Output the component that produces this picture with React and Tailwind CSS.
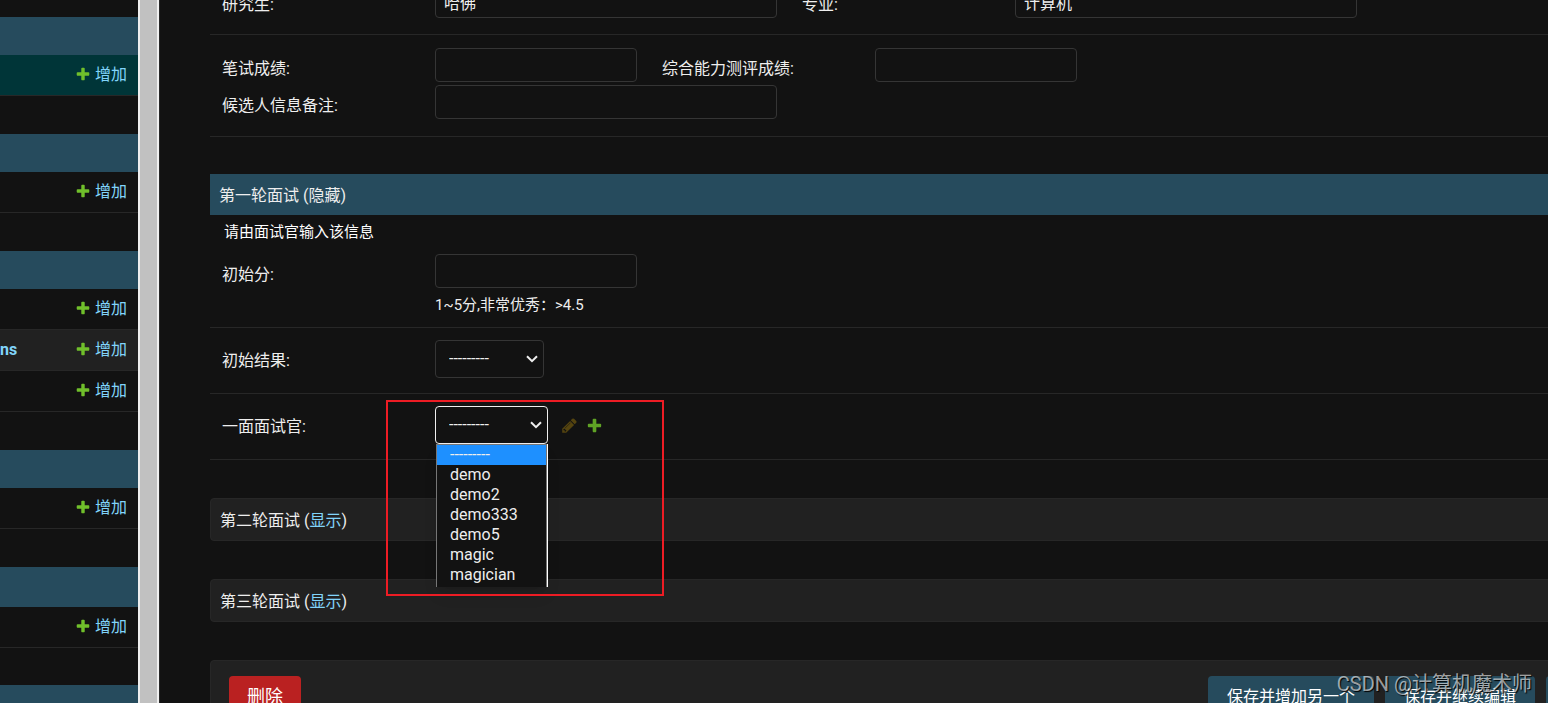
import React, { useState } from 'react';

const sidebarGroups = [
  { rows: [{ name: '', current: true }] },
  { rows: [{ name: '' }] },
  { rows: [{ name: '' }, { name: 'ns', striped: true }, { name: '' }] },
  { rows: [{ name: '' }] },
  { rows: [{ name: '' }], tall: true },
  { rows: [] },
];

const interviewers = ['---------', 'demo', 'demo2', 'demo333', 'demo5', 'magic', 'magician'];

const PlusIcon = ({ className }) => (
  <svg viewBox="0 0 1792 1792" className={className} fill="currentColor" aria-hidden="true">
    <path d="M1600 796v192q0 40-28 68t-68 28h-416v416q0 40-28 68t-68 28h-192q-40 0-68-28t-28-68v-416h-416q-40 0-68-28t-28-68v-192q0-40 28-68t68-28h416v-416q0-40 28-68t68-28h192q40 0 68 28t28 68v416h416q40 0 68 28t28 68z" />
  </svg>
);

const PencilIcon = ({ className }) => (
  <svg viewBox="0 0 1792 1792" className={className} fill="currentColor" aria-hidden="true">
    <path d="M491 1536l91-91-235-235-91 91v107h128v128h107zm523-928q0-22-22-22-10 0-17 7l-542 542q-7 7-7 17 0 22 22 22 10 0 17-7l542-542q7-7 7-17zm-54-192l416 416-832 832h-416v-416zm683 96q0 53-37 90l-166 166-416-416 166-165q36-38 90-38 53 0 91 38l235 234q37 39 37 91z" />
  </svg>
);

const Sidebar = () => (
  <nav className="w-[138px] shrink-0 overflow-hidden pt-[17px]">
    {sidebarGroups.map((group, i) => (
      <section key={i} className={group.tall ? 'mb-[37px]' : 'mb-[38px]'}>
        <div className={group.tall ? 'h-10 bg-[#264b5d]' : 'h-[38px] bg-[#264b5d]'} />
        {group.rows.map((row, j) => (
          <div
            key={j}
            className={`flex h-[41px] items-center justify-between border-b border-[#272727] pr-[11px] ${
              row.current ? 'bg-[#003538]' : row.striped ? 'bg-[#212121]' : ''
            }`}
          >
            <span className="font-bold text-[#81d4fa]">{row.name}</span>
            <a href="#" className="flex items-center gap-1 text-[#81d4fa]">
              <PlusIcon className="mb-0.5 size-4 text-[#70bf2b]" />
              增加
            </a>
          </div>
        ))}
      </section>
    ))}
  </nav>
);

const Row = ({ className = 'pt-3 pb-[15px]', children }) => (
  <div className={`border-b border-[#272727] px-3 ${className}`}>{children}</div>
);

const Field = ({ id, label, children }) => (
  <div className="flex items-start">
    <label htmlFor={id} className="w-[213px] shrink-0 pt-[11px] leading-5">{label}</label>
    {children}
  </div>
);

const TextInput = ({ id, wide, defaultValue }) => (
  <input
    id={id}
    type="text"
    defaultValue={defaultValue}
    className={`h-[34px] rounded border border-[#353535] bg-[#121212] px-2 pt-0.5 outline-none ${
      wide ? 'w-[342px]' : 'w-[202px]'
    }`}
  />
);

const Select = ({ id, value, onChange, options, className }) => (
  <div className="relative">
    <select
      id={id}
      value={value}
      onChange={(e) => onChange(e.target.value)}
      className={`block h-[38px] appearance-none rounded border bg-[#121212] px-[13px] outline-none ${className}`}
    >
      {options.map((name) => (
        <option key={name}>{name}</option>
      ))}
    </select>
    <svg
      viewBox="0 0 12 8"
      className="pointer-events-none absolute top-[15px] right-1.5 h-2 w-3"
      fill="none"
      stroke="currentColor"
      strokeWidth="2"
      aria-hidden="true"
    >
      <path d="M1 1.2L6 6.2L11 1.2" />
    </svg>
  </div>
);

const CollapsedModule = ({ title }) => (
  <section className="mb-[38px] rounded border border-[#272727] bg-[#212121] px-[9px] pt-[11px] pb-[9px]">
    <h2 className="leading-[21px]">
      {title} (<a href="#" className="text-[#81d4fa]">显示</a>)
    </h2>
  </section>
);

export default function App() {
  const [result, setResult] = useState('---------');
  const [interviewer, setInterviewer] = useState('---------');

  return (
    <div className="relative flex h-screen overflow-hidden bg-[#121212] font-[Roboto,'Noto_Sans_CJK_SC',sans-serif] text-base text-[#eeeeee]">
      <Sidebar />
      <div className="w-[21px] shrink-0 border-x-2 border-[#efefef] bg-[#c1c1c1]" />

      {/* the form is wider than the visible area */}
      <main className="-mr-[87px] min-w-0 flex-1 border-l border-[#272727] pl-[50px]">
        <form onSubmit={(e) => e.preventDefault()}>
          {/* BASIC INFO */}
          <section className="-mt-[29px] mb-[37px]">
            <Row className="flex gap-[25px] pt-[13px] pb-4">
              <Field id="master" label="研究生:">
                <TextInput id="master" wide defaultValue="哈佛" />
              </Field>
              <Field id="major" label="专业:">
                <TextInput id="major" wide defaultValue="计算机" />
              </Field>
            </Row>
            <Row className="space-y-[3px] pt-[13px] pb-[17px]">
              <div className="flex gap-[25px]">
                <Field id="test_score" label="笔试成绩:">
                  <TextInput id="test_score" />
                </Field>
                <Field id="ability_score" label="综合能力测评成绩:">
                  <TextInput id="ability_score" />
                </Field>
              </div>
              <Field id="remark" label="候选人信息备注:">
                <TextInput id="remark" wide />
              </Field>
            </Row>
          </section>

          {/* FIRST ROUND */}
          <section className="mb-[38px]">
            <h2 className="bg-[#264b5d] px-[9px] pt-[11px] pb-[9px] leading-[21px]">
              第一轮面试 (<a href="#">隐藏</a>)
            </h2>
            <p className="px-3.5 pt-[7px] text-[15px] leading-5 text-white">请由面试官输入该信息</p>
            <Row className="py-3">
              <Field id="first_score" label="初始分:">
                <div>
                  <TextInput id="first_score" />
                  <p className="mt-[7px] text-[15px] leading-5">1~5分,非常优秀：&gt;4.5</p>
                </div>
              </Field>
            </Row>
            <Row>
              <Field id="first_result" label="初始结果:">
                <Select
                  id="first_result"
                  value={result}
                  onChange={setResult}
                  options={['---------', '通过', '待定']}
                  className="w-[109px] border-[#353535]"
                />
              </Field>
            </Row>
            <Row>
              <Field id="first_interviewer" label="一面面试官:">
                <div className="relative flex items-center">
                  <Select
                    id="first_interviewer"
                    value={interviewer}
                    onChange={setInterviewer}
                    options={interviewers}
                    className="w-[113px] border-[#eeeeee]"
                  />
                  <a href="#" aria-label="更改" className="ml-[13px] text-[#efb80b] opacity-30">
                    <PencilIcon className="size-[17px]" />
                  </a>
                  <a href="#" aria-label="增加" className="ml-2 text-[#5fa225]">
                    <PlusIcon className="size-[17px]" />
                  </a>
                  <ul className="absolute top-[38px] left-px z-10 w-28 border-r border-white bg-[#121212] shadow-lg">
                    {interviewers.map((name, i) => (
                      <li
                        key={name}
                        className={`border-x border-[#767676] pl-[13px] leading-5 last:pb-0.5 ${
                          i === 0 ? 'border-t bg-[#1e90ff]' : ''
                        }`}
                      >
                        {name}
                      </li>
                    ))}
                  </ul>
                  {/* highlight frame around the open menu */}
                  <div className="pointer-events-none absolute -top-1.5 -left-[49px] z-20 h-[196px] w-[278px] border-2 border-[#ed1c24]" />
                </div>
              </Field>
            </Row>
          </section>

          <CollapsedModule title="第二轮面试" />
          <CollapsedModule title="第三轮面试" />

          {/* SUBMIT ROW */}
          <div className="flex items-start gap-[11px] rounded border border-[#272727] bg-[#212121] px-[18px] py-[15px]">
            <button type="button" className="mr-auto h-[42px] rounded bg-[#ba2121] px-[18px] text-lg text-white">
              删除
            </button>
            <button type="submit" className="h-[42px] rounded bg-[#264b5d] px-[19px] text-white">保存并增加另一个</button>
            <button type="submit" className="h-[42px] rounded bg-[#264b5d] px-[19px] text-white">保存并继续编辑</button>
            <button type="submit" className="h-[42px] rounded bg-[#264b5d] px-[19px] text-white">保存</button>
          </div>
        </form>
      </main>

      <span className="pointer-events-none absolute right-4 bottom-[3px] text-xl leading-8 text-white/60 [text-shadow:1px_1px_1px_#000]">
        CSDN @计算机魔术师
      </span>
    </div>
  );
}
